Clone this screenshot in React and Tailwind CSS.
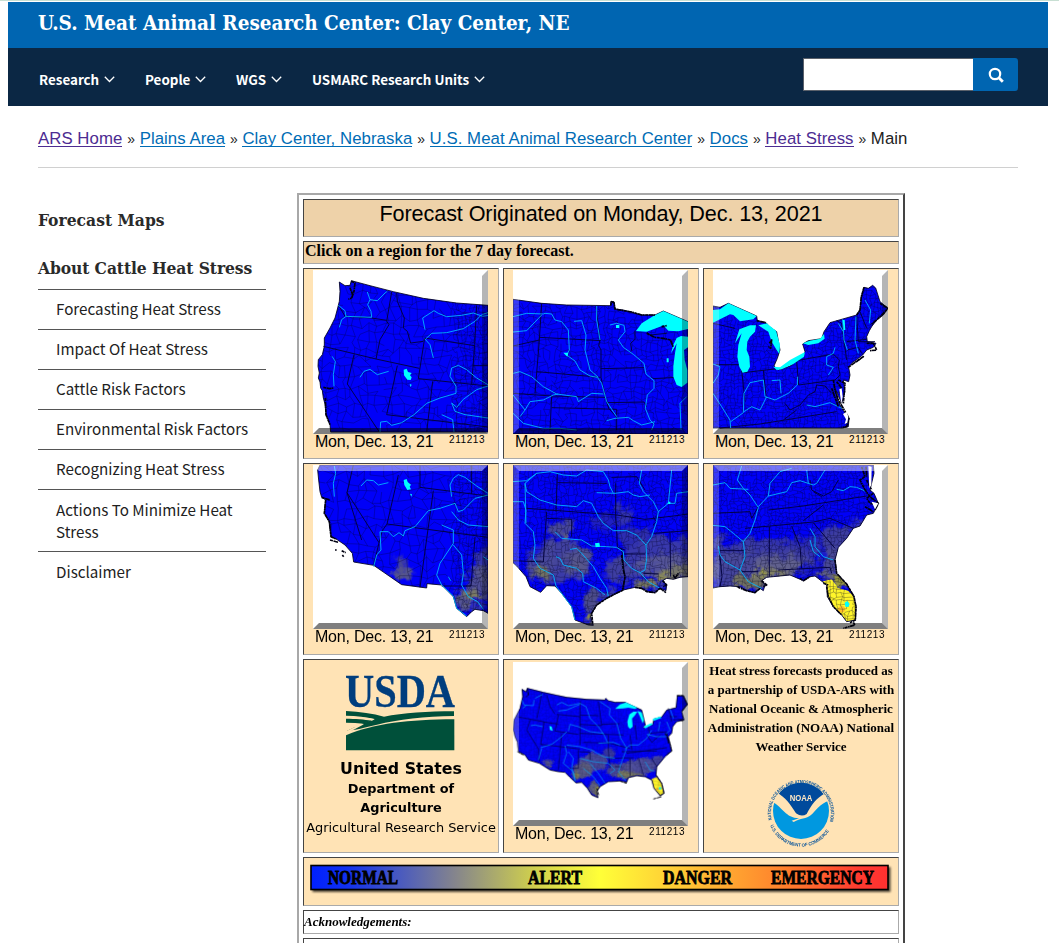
import React from "react";

const RIVER = "#00b4ff";

/* Irregular grid of county borders covering a w x h area. */
function counties(w, h, step, seed) {
  let s = seed;
  const rnd = () => {
    s = (s * 16807) % 2147483647;
    return s / 2147483647 - 0.5;
  };
  const nx = Math.ceil(w / step) + 1;
  const ny = Math.ceil(h / step) + 1;
  const p = [];
  for (let j = 0; j < ny; j++) {
    const row = [];
    for (let i = 0; i < nx; i++) row.push([Math.round(i * step + rnd() * step * 0.9), Math.round(j * step + rnd() * step * 0.9)]);
    p.push(row);
  }
  let d = "";
  for (let j = 0; j < ny; j++)
    for (let i = 0; i < nx; i++) {
      if (i + 1 < nx && rnd() < 0.32) d += `M${p[j][i]}L${p[j][i + 1]}`;
      if (j + 1 < ny && rnd() < 0.32) d += `M${p[j][i]}L${p[j + 1][i]}`;
    }
  return d;
}

const MAPS = {
  nw: {
    box: [69, 256, 525, 492], step: 24, east: 490,
    land: "M148 292L165 303L180 302L184 288L240 303L310 321L400 341L500 355L594 362V742H122L120 720L108 690L105 658L100 640L97 618L92 610L90 592L85 580L88 565L84 545L85 525L97 510L103 485L103 460L120 430L135 400L143 370L148 350L150 320Z",
    states: "M146 362L165 395L245 400L290 407M100 485L258 523L388 551M305 322L290 410L297 420L270 465L258 523M320 325L322 350L343 400L340 430L352 440L362 475L400 470M404 460L554 483M404 460L385 582L594 604M554 480L545 600M192 510L172 598L268 742M322 543L290 690L594 727M428 590L410 742M560 363L554 480M548 543H594",
    coast: "M184 290L195 295L192 320L185 340L175 344M180 310L188 330M100 608L118 612L130 610M106 640L108 690L120 720",
    rivers: "M145 362L165 378L168 395L245 398L243 380L233 360L240 345L232 322M148 428L155 405L168 395M240 345L262 348L285 325L292 320M405 435L398 400L432 378L445 386L470 396L515 392L550 385L578 395L594 392M408 462L425 446L470 444L520 432L555 410L575 390L594 384M404 462L420 480L430 520M210 578L222 560L240 554L262 570L296 560M126 515L136 530L130 570L132 605M270 742L272 712L290 710L305 722L335 714L372 690L410 656L450 640L498 626L498 605L480 575L485 550L505 542L530 555L560 580L594 600M485 655L500 668L520 644L560 615L594 604M485 655L495 680L525 690L594 700M455 690L488 705L492 742",
    water: "M341 555L350 552L354 562L365 565L360 572L365 578L362 586L352 585L342 572ZM359 598L365 600L362 607Z",
    right: true,
  },
  nc: {
    box: [39, 30, 525, 492], step: 16, east: 0,
    land: "M39 118L125 130L200 135L332 137L332 125L342 125L345 147L370 150L400 158L425 165L465 165L490 153L564 185V522H39Z",
    states: "M125 130L118 240L39 258M118 232L302 242M118 240L105 400M110 335L302 352M39 400L155 408L315 412M155 408L150 510M155 443L350 448V510M288 138L300 240L296 256L303 270V352L316 412L326 445L348 470M302 326L432 323M318 428L432 426L440 440M395 272L392 250L405 238V212M458 356L530 352M500 220L450 225L440 216M510 240L520 262",
    coast: "M332 137L335 125L342 128L345 147L370 152L395 156L425 165L465 165M440 220L465 232L490 235L512 240L520 262M485 200L500 197",
    rivers: "M39 170L80 160L130 162L135 160L155 162L165 180L185 185L205 210L208 270L200 285L225 303L240 330L270 348L292 352L305 370L320 425L340 455L350 470M290 138L290 180L300 240M222 184L245 182L258 225L255 270L270 330L295 352M330 195L350 190L372 196L375 215L355 240L370 262L400 283L432 310L438 342L462 362L462 385L442 405L436 445L450 480L462 492L455 510M39 216L80 212L125 165M40 340L60 335L95 350L130 380L170 402L230 410L235 425L275 400L310 402M60 470L75 450L90 425L130 420L160 405L175 402M39 405L75 450M39 460L70 490L130 505L180 505L230 510M320 482L345 475L385 472L400 482L425 495L465 485M543 510L540 430L560 410",
    water: "M408 213L425 190L460 168L490 153L564 185V207L535 214L505 212L490 196L480 200L440 215ZM513 280L520 255L530 234L543 228L564 230V262L552 270L554 300L562 330V368L545 381L530 375L520 350L520 318L525 280L530 250L522 265ZM348 195H358V204H348ZM500 295H506V307H500ZM190 278L205 278L202 290Z",
    left: true, right: true,
  },
  ne: {
    box: [39, 30, 525, 492], step: 11, east: 0,
    land: "M39 138L60 142L85 130L170 168L172 182L200 190L208 200L230 215L240 270L232 295L222 318L235 330L270 318L305 292L315 275L308 252L325 242L365 236L372 215L390 188L470 165L480 150L484 110L492 82L505 85L518 76L527 84L540 125L564 145L550 165L530 180L515 200L508 212L500 230L502 245L528 250L520 262L500 270L488 285L455 310L446 322L450 345L446 365L430 360L435 395L425 430L405 385L415 425L425 445L447 475L445 500L425 504H39Z",
    states: "M39 190L105 205M48 314L130 314M130 338L240 325M125 330L135 425M190 330L198 410M290 302L296 375L405 360L420 345L415 320L418 300L400 282L290 302M60 504L180 492L410 455M255 430L270 450L300 435L325 405L345 395L350 375L375 378L395 400M410 182L425 190L440 300M470 170L475 245L525 245M440 245L500 238M440 270L475 262L485 280M480 155L500 205M250 480L290 450",
    coast: "M208 250L215 240L212 265L205 260M400 360L405 390L415 420L430 445L447 475L440 500L425 503M410 365L425 385L418 400M445 322L475 300L490 290L470 305M500 250L520 250L530 270L510 272M540 130L564 145L550 160L530 180L512 195M415 360L435 370L430 430M170 182L198 188M395 385L415 440M470 165L480 150L484 110L492 82",
    rivers: "M39 312L60 320L55 345L39 370M39 400L65 440L90 480L92 504M92 485L130 458L132 400L150 368L190 360L195 410L225 420L265 400L292 375L293 350M132 455L155 440L180 450L200 410M215 362L240 360L243 400M428 178L432 240L442 270M468 170L465 240L475 280M415 190L430 215M405 262L400 280L380 290L380 315L400 322L385 345M320 435L345 440L390 428L425 445M495 120L512 150L508 190",
    water: "M39 150L60 148L85 130L170 168L160 178L120 184L100 165L90 163L39 188ZM105 250L118 208L150 196L168 196L165 215L150 230L142 245L140 270L148 290L150 320L142 335L128 338L118 320L112 290L115 255L125 220ZM175 196L200 190L228 212L240 255L238 282L230 270L215 245L205 215ZM220 320L240 322L270 300L315 276L312 290L280 312L245 328L230 330ZM308 250L330 242L360 236L372 222L374 236L355 250L325 255ZM428 180H434L436 210H431Z",
    islands: "M429 462L440 455L445 470L442 488L434 492L438 478ZM418 388L425 385L428 410L424 432Z",
    left: true, right: true,
  },
  sw: {
    box: [54, 15, 525, 492], step: 26, east: 480,
    land: "M75 15L68 30L71 60L75 95L80 112L92 120L88 160L103 185L108 230L125 238L150 255L172 280L176 306L236 316L320 374L395 384L396 371L440 375L475 410L485 445L515 470L530 455L540 448L565 452L579 460V15Z",
    states: "M175 15L156 98L252 248L236 316M156 98L200 240M310 45L276 192L579 232M415 92L375 382M375 82L579 108M375 15L375 84M530 15V102M540 232L528 378H440M276 192L262 212L252 248",
    coast: "M80 112L105 120M92 120L88 160L103 185L108 230L125 238M105 240L130 247M140 272L152 278M120 270H125M142 285L146 290",
    rivers: "M118 18L122 40L115 70L118 110M198 78L215 60L235 62L250 75L280 68M470 110L465 75L475 55L490 44L510 52L545 78L579 100M236 320L245 285L258 270L255 215L280 215L295 230L312 218L325 228L330 212L360 200L400 152L435 145L480 130M480 130L490 155L505 150L540 115L579 105M470 155L490 180L520 195L579 200M440 195L475 210L475 250L435 310L425 345L440 375L475 408L485 445L515 468M475 255L500 285L505 340L500 375L520 410L548 425L565 448M565 290L579 300M460 350L467 362",
    water: "M326 60L335 57L338 66L348 74L344 80L348 88L337 90L328 75ZM345 101L351 103L349 110Z",
    haze: [[320, 318, 20, 28, "#4b4a90", 0.9], [325, 338, 26, 14, "#5c5c84", 0.9], [570, 320, 30, 55, "#3a3aa8", 0.9], [555, 370, 42, 45, "#5a5a86", 0.85], [522, 408, 28, 18, "#85855a", 0.95], [500, 425, 20, 28, "#6c6c78", 0.8], [550, 440, 30, 12, "#4c4c98", 0.8]],
    top: true, right: true,
  },
  sc: {
    box: [39, 15, 525, 492], step: 12, east: 0,
    land: "M39 15H564V350L540 352L520 358L500 355L488 362L500 375L498 392L480 385L465 398L445 395L425 385L405 382L370 390L345 402L320 415L290 435L275 460L272 470L280 496L265 495L225 480L215 440L185 400L165 378L140 377L122 397L90 380L78 350L50 318L39 308Z",
    states: "M172 40L168 155M172 68L320 70M80 145L350 165L435 178L520 168L564 162M140 155L130 306L39 302M140 175L215 178V230M347 70V170L350 210L352 262L375 270M335 52L410 50L435 90M370 282H435M460 172L470 185L460 195M460 220L564 212M510 218L512 350M430 340L475 342M365 265L372 330L375 350L370 388",
    coast: "M405 382L425 385L440 395L465 398L480 385L498 398M488 362L500 375L490 380M370 390L345 402L320 415L290 435L275 460L278 490M365 285L370 330L375 350L368 388M520 345L525 355L535 340",
    rivers: "M39 65L80 62L110 40L150 35L190 45L230 48L260 30L310 35L325 60L330 80L340 100M290 98L345 100L385 95L400 105L420 110L450 105M425 30L418 70L430 95L460 125L475 155L470 185L455 230L438 255L440 295L435 330L420 338L445 365L480 385M75 70L80 95L120 120L170 135L230 140L250 122L275 130L295 170L310 190L340 212L380 212L410 225L438 255M165 215L185 235L245 240L275 258L320 260L350 262L370 275L372 300L395 325L420 338M210 268L230 265L245 280L280 320L300 355L320 385L325 410M168 290L180 295L190 315L230 325L248 340L250 365L290 385L315 405M39 125L70 125L78 150L75 190L100 215L105 255L100 295L120 325L160 345L168 378M515 30L510 80L505 130L475 155M565 95L530 100L525 130L500 130M168 378L215 440L225 480M78 190L75 70L110 40",
    water: "M285 250L298 248L300 260L287 262ZM505 125H511V132H505Z",
    haze: [[190, 290, 75, 50, "#4a4a98", 0.9], [150, 330, 70, 40, "#46469a", 0.85], [240, 300, 40, 40, "#55558c", 0.8], [130, 290, 40, 40, "#48489a", 0.7], [180, 205, 34, 26, "#50508e", 0.9], [198, 232, 12, 16, "#777765", 0.9], [125, 340, 24, 22, "#77775a", 0.9], [230, 330, 35, 30, "#5c5c88", 0.7], [330, 185, 70, 20, "#2828b4", 0.8], [375, 160, 24, 26, "#3838a8", 0.9], [410, 235, 70, 30, "#38389f", 0.8], [355, 330, 38, 40, "#444496", 0.9], [400, 310, 40, 50, "#46469a", 0.8], [490, 270, 90, 40, "#3c3ca4", 0.9], [500, 315, 90, 35, "#5a5a92", 0.9], [530, 338, 60, 18, "#787868", 0.95], [445, 378, 50, 20, "#808058", 0.95], [275, 420, 26, 30, "#55557f", 0.9], [265, 475, 18, 22, "#909040", 0.95], [495, 350, 18, 7, "#b0b038", 1], [320, 400, 35, 16, "#4c4c96", 0.8]],
    top: true, left: true, right: true,
  },
  se: {
    box: [39, 15, 525, 492], step: 11, east: 0,
    land: "M39 15H520L522 40L510 90L522 100L535 130L520 160L500 165L480 198L460 205L440 235L415 262L405 300L410 340L440 372L462 410L468 440L466 480L440 485L425 465L400 440L382 410L380 375L345 348L330 350L310 362L270 345L220 350L200 352L185 362L195 375L190 392L180 385L165 398L140 392L120 380L90 378L60 380L39 384Z",
    states: "M39 160L150 155L155 175L175 140M205 150L310 138L500 108M135 205L340 186L390 175L460 205M208 200V350M275 198L300 260L305 325M235 330L390 322L395 340M60 272H132M125 335H175M340 188L405 265M310 182L370 135M330 60L335 90L370 108L395 95L415 60M365 110L340 95M60 380L66 350L58 270",
    coast: "M180 385L165 398L140 392L110 380M185 362L200 375L190 380M485 20L495 50L480 60L495 90L510 110L535 130L525 150M500 60L515 90M498 20L500 50M520 100L500 115L510 130L535 135M495 140L520 155M300 355L310 362L330 350M405 300L410 340L440 372L462 410L468 440L466 480L450 488M380 380L385 410L400 440L425 465M460 487L465 495L430 505M370 370L385 375",
    rivers: "M125 18L112 60L130 85L150 105L170 135L175 142L165 180L150 220L130 245L135 290L120 330L145 365L185 385M39 75L75 68L90 85L145 88M205 108L210 70L240 35L275 25M175 140L205 108L260 95L275 68L300 62L340 75L350 70L375 30M320 30L325 70M39 196L75 200L100 220L130 245M55 258L60 285L75 305L120 330M410 88L430 92L450 80L470 82L500 95M330 205L345 230L345 260L370 290L400 300M330 240L340 275L360 290",
    water: "M434 428L442 423L449 432L445 441L436 440Z",
    islands: "M505 18L515 20L514 75L508 85ZM515 125L535 130L525 148Z",
    haze: [[200, 275, 160, 36, "#3a3aa4", 0.95], [200, 310, 160, 32, "#4c4c98", 0.95], [360, 245, 90, 26, "#2c2cb0", 0.8], [420, 235, 50, 40, "#3f3f9e", 0.95], [470, 190, 20, 16, "#4848a0", 0.8], [90, 330, 60, 50, "#46469a", 0.95], [230, 320, 70, 26, "#64648c", 0.9], [150, 370, 55, 24, "#77775a", 0.95], [220, 342, 60, 12, "#85855a", 0.95], [180, 345, 16, 7, "#b0b030", 1], [395, 300, 26, 40, "#505092", 0.95], [375, 347, 40, 14, "#686878", 0.95], [425, 360, 25, 30, "#99993c", 1], [60, 260, 25, 40, "#3a3aa5", 0.9], [335, 325, 36, 14, "#1818d0", 0.9]],
    florida: "M365 365L395 358L415 385L445 392L462 410L468 440L466 480L440 485L425 465L400 440L382 410L380 375Z",
    orange: [425, 448],
    top: true, left: true, right: true,
  },
  us: {
    box: [39, 21, 525, 492], step: 9, east: 0, faint: true,
    land: "M66 103L78 110L82 100L130 112L200 127L260 133L315 135L317 130L325 137L345 142L375 142L425 165L436 210L430 218L458 208L462 192L485 186L500 165L528 158L532 122L550 122L562 148L545 170L552 195L530 200L518 215L515 235L505 245L512 275L515 288L495 305L470 335L468 360L485 385L492 415L480 422L462 400L455 375L435 365L410 362L385 368L380 382L360 378L325 380L300 395L290 410L294 428L275 420L262 400L245 382L228 384L208 365L195 352L175 350L150 345L118 325L85 315L75 300L55 290L52 262L45 245L40 225L42 195L60 160L68 125Z",
    states: "M52 185L155 205L175 207M125 112L118 155L110 190M140 120L150 155L165 178M170 178L240 185M175 180L165 228L235 238M90 195L80 225L115 282L118 320M132 200L122 268M122 268L240 282M185 235L175 345M240 140V270M240 180L295 182M240 208L305 212M240 235L370 240M250 262L325 264L390 280M235 285V340L205 340M238 290L270 292V315M325 240V290L330 340M295 140L305 212M305 208L360 206M365 290L470 288M390 240L395 285M390 310V362M415 308L430 360M330 310L400 308M345 335H365M380 295L500 278M440 240L455 262L480 240M455 310L470 335M405 210L410 255M445 215L448 235L500 230M505 160L515 200M520 195L548 192M510 185L530 185",
    coast: "M82 100L85 120L78 125M495 235L510 265L515 288L500 300M500 235L505 265M360 378L380 385M530 122L550 122L562 148L545 170M540 195L550 198M52 290L70 300M290 400L296 420M468 360L485 385L492 415L480 422M460 432L485 425",
    rivers: "M66 135L72 150L100 152L102 135M68 160L78 152M105 130L128 118M170 150L185 142L205 152L240 145L258 155L270 190L295 215L312 240L322 262M175 168L200 165L240 148M92 212L105 210L128 215M125 280L115 315M122 278L155 268L185 245L200 230M205 228L210 208L235 215L270 230L310 235M200 270L240 275L275 285L310 305L345 310M195 272L200 295L190 325L220 350L225 380M205 290L220 310L215 340L225 375M240 310L280 320L325 325L345 345M250 340L280 365L300 392M270 325L295 355L315 385M300 140L315 150L330 160L328 180L350 205L362 250L380 280L365 320L355 350L378 378M345 345L330 355M375 282L390 270L415 270L440 250L455 225M295 265L340 262L360 270M500 200L510 225L495 240M480 200L475 228M435 320L450 345L462 348M510 162L520 190M440 238L470 245L500 245",
    water: "M345 162L360 148L378 142L412 158L405 162L385 158L370 160ZM382 200L388 178L400 170H412L404 182L396 190L398 215L390 222L384 215ZM412 168L425 172L432 195L428 205L420 185ZM430 215L455 204L458 208L436 220ZM458 192L482 184L484 189L460 198ZM148 213L155 215L158 228L150 225Z",
    haze: [[145, 325, 13, 11, "#5a5a80", 0.9], [280, 320, 45, 26, "#505090", 0.9], [250, 345, 30, 24, "#60607c", 0.9], [228, 362, 13, 12, "#808050", 0.9], [330, 295, 20, 16, "#3c3c9c", 0.9], [360, 345, 40, 22, "#50508e", 0.9], [420, 335, 45, 22, "#555592", 0.9], [390, 360, 45, 9, "#808058", 0.9], [470, 322, 18, 18, "#4c4c94", 0.9], [282, 400, 18, 22, "#686870", 0.9], [292, 412, 8, 14, "#a8a838", 1]],
    florida: "M455 372L470 366L485 385L492 415L480 422L462 400Z",
    orange: [472, 402],
    lake: [480, 400],
    left: true, right: true,
  },
};

function RegionMap({ id }) {
  const m = MAPS[id];
  const [x, y, w, h] = m.box;
  const r = x + w;
  const b = y + h;
  const fade = `fade-${id}`;
  const clip = `land-${id}`;
  const rough = `rough-${id}`;
  return (
    <svg className="block h-[164px] w-[175px] bg-white" viewBox={`${x} ${y} ${w} ${h}`} preserveAspectRatio="none">
      <defs>
        <clipPath id={clip}><path d={m.land} /></clipPath>
        <filter id={fade} x="-50%" y="-50%" width="200%" height="200%"><feGaussianBlur stdDeviation={m.faint ? 3 : 7} /></filter>
        <filter id={rough} filterUnits="userSpaceOnUse" x={x} y={y} width={w} height={h}>
          <feTurbulence type="fractalNoise" baseFrequency="0.03" numOctaves="3" seed="4" />
          <feDisplacementMap in="SourceGraphic" scale={m.faint ? 25 : 60} xChannelSelector="R" yChannelSelector="G" />
        </filter>
      </defs>
      <path d={m.land} fill="#0000f8" />
      <g clipPath={`url(#${clip})`}>
        {m.haze && (
          <g filter={`url(#${rough})`}>
            {m.haze.map(([cx, cy, rx, ry, fill, o], i) => (
              <ellipse key={i} cx={cx} cy={cy} rx={rx} ry={ry} fill={fill} opacity={o} filter={`url(#${fade})`} />
            ))}
          </g>
        )}
        {m.florida && <path d={m.florida} fill="#fff52a" />}
        {m.orange && <circle cx={m.orange[0]} cy={m.orange[1]} r={m.faint ? 4 : 10} fill="#ffc02a" />}
        <path d={counties(w, h, m.step, 77)} transform={`translate(${x} ${y})`} fill="none" stroke="#000028" strokeWidth={m.faint ? 1.5 : 2} opacity={m.faint ? 0.25 : 0.42} />
        {m.east > 0 && <path d={counties(r - m.east, h, 13, 31)} transform={`translate(${m.east} ${y})`} fill="none" stroke="#000028" strokeWidth="2" opacity="0.4" />}
      </g>
      <path d={m.land} fill="none" stroke="#00001c" strokeWidth="2.5" strokeLinejoin="round" />
      <path d={m.states} fill="none" stroke="#00003c" strokeWidth={m.faint ? 2 : 2.8} />
      <path d={m.rivers} fill="none" stroke={RIVER} strokeWidth={m.faint ? 2 : 3} strokeLinejoin="round" opacity="0.9" />
      <path d={m.water} fill="#00ffff" />
      {m.lake && <circle cx={m.lake[0]} cy={m.lake[1]} r="4" fill="#20e8d8" />}
      <path d={m.coast} fill="none" stroke="#000010" strokeWidth={m.faint ? 3 : 5} strokeLinejoin="round" strokeDasharray="9 2 14 1 5 2" />
      {m.islands && <path d={m.islands} fill="#fff" />}
      {m.top && <path d={`M${x} ${y}H${r}L${r - 18} ${y + 18}H${x + 18}Z`} fill="#fff" opacity="0.45" />}
      {m.left && <path d={`M${x} ${y}L${x + 18} ${y + 18}V${b - 18}L${x} ${b}Z`} fill="#fff" opacity="0.22" />}
      <path d={`M${r} ${y}L${r - 18} ${y + 18}V${b - 18}L${r} ${b}Z`} fill="#000" opacity="0.29" />
      <path d={`M${x} ${b}L${x + 18} ${b - 18}H${r - 18}L${r} ${b}Z`} fill="#000" opacity="0.5" />
    </svg>
  );
}

const CELL = "border border-t-[#444] border-l-[#444] border-r-[#aaa] border-b-[#aaa]";

function MapCell({ id, top = "pt-px" }) {
  return (
    <a className={`${CELL} ${top} block bg-[#ffe3b5] pl-[9px]`}>
      <RegionMap id={id} />
      <div className="flex w-[175px] justify-between pr-[3px] pl-[2px] leading-[16px]">
        <span className="text-[16px] whitespace-nowrap tracking-[-0.22px]">Mon, Dec. 13, 21</span>
        <span className="pt-px text-[10px] leading-[9px] tracking-[0.55px]">211213</span>
      </div>
    </a>
  );
}

function UsdaLogo() {
  return (
    <svg className="mx-auto block h-[78px] w-[110px]" viewBox="154 53 330 234">
      <text x="151" y="154" textLength="330" lengthAdjust="spacingAndGlyphs" fontFamily="Liberation Serif" fontSize="139" fill="#003e7e" stroke="#003e7e" strokeWidth="1">USDA</text>
      <g fill="#00503a">
        <path d="M153 167C195 169 235 175 268 184C325 173 400 168 478 168V182C390 183 310 193 247 208C210 217 180 224 156 227C180 215 210 202 240 191C215 185 185 181 153 181Z" />
        <path d="M153 240C240 204 340 193 479 192V285H153Z" />
      </g>
      <path d="M153 183C185 184 215 187 240 192L232 196C210 191 180 188 153 188ZM153 204C175 204 195 205 208 207L153 236V228L182 214L153 212Z" fill="#ffe3b5" />
      <path d="M153 190C180 190 210 192 230 196L207 205C190 203 172 202 153 202Z" fill="#00503a" />
    </svg>
  );
}

function NoaaLogo() {
  return (
    <svg className="mx-auto block h-[68px] w-[68px] overflow-visible" viewBox="200 366 204 204">
      <defs>
        <path id="noaa-top" d="M214 495A90 90 0 1 1 388 500" />
        <path id="noaa-bottom" d="M206 500A99 99 0 0 0 398 500" />
      </defs>
      <circle cx="302" cy="468" r="84" fill="#0098e0" />
      <path d="M232 421A84 84 0 0 1 372 421C355 431 342 455 331 477C318 486 298 487 281 479C268 450 252 430 232 421Z" fill="#004a9c" />
      <path d="M228 412C256 427 270 448 287 475Q304 487 319 477C333 451 347 429 376 414L386 437C358 446 346 468 332 480C318 493 300 488 280 501L274 497L296 490C255 488 248 458 217 441Z" fill="#ffe3b5" />
      <text x="302" y="437" textAnchor="middle" textLength="68" lengthAdjust="spacingAndGlyphs" fontFamily="Liberation Sans" fontWeight="700" fontSize="29" fill="#ffe8c5">NOAA</text>
      <g fontFamily="Liberation Sans" fontWeight="700" fontSize="14" fill="#0a559b">
        <text><textPath href="#noaa-top" textLength="328" lengthAdjust="spacingAndGlyphs">NATIONAL OCEANIC AND ATMOSPHERIC ADMINISTRATION</textPath></text>
        <text><textPath href="#noaa-bottom" startOffset="12" textLength="220" lengthAdjust="spacingAndGlyphs">U.S. DEPARTMENT OF COMMERCE</textPath></text>
      </g>
    </svg>
  );
}

function Chevron() {
  return (
    <svg className="mt-px ml-[5px] h-[7px] w-[11px]" viewBox="0 0 11 7" fill="none" stroke="#fff" strokeWidth="1.3">
      <path d="M.8 .8L5.5 5.5L10.2 .8" />
    </svg>
  );
}

const NAV = [
  ["Research", "w-[106px]"],
  ["People", "w-[91px]"],
  ["WGS", "w-[76px]"],
  ["USMARC Research Units", "w-[200px]"],
];

const CRUMBS = [
  ["ARS Home", "text-[#4c2c92] border-[#4c2c92]"],
  ["Plains Area", "text-[#006cb5] border-[#006cb5]"],
  ["Clay Center, Nebraska", "text-[#006cb5] border-[#006cb5]"],
  ["U.S. Meat Animal Research Center", "text-[#006cb5] border-[#006cb5]"],
  ["Docs", "text-[#006cb5] border-[#006cb5]"],
  ["Heat Stress", "text-[#4c2c92] border-[#4c2c92]"],
];

const LINKS = ["Forecasting Heat Stress", "Impact Of Heat Stress", "Cattle Risk Factors", "Environmental Risk Factors", "Recognizing Heat Stress"];

const SANS = "font-['Noto_Sans_CJK_SC',sans-serif]";
const SLAB = "font-['DejaVu_Serif_Condensed','DejaVu_Serif',serif] font-bold";

export default function App() {
  return (
    <div className="h-[943px] w-[1059px] overflow-hidden bg-white font-['Liberation_Sans',sans-serif] text-black">
      <div className="mb-px h-px bg-[#c8dfd3]" />
      <header className="ml-2 w-[1040px]">
        <div className="h-[46px] bg-[#0065b1] pl-[30px]">
          <h1 className={`${SLAB} text-[20.5px] leading-[43px] tracking-[-0.02px] whitespace-nowrap text-white`}>U.S. Meat Animal Research Center: Clay Center, NE</h1>
        </div>
        <nav className="flex h-[58px] items-start justify-between bg-[#0b2744] pr-[30px] pl-[31px]">
          <div className={`${SANS} flex pt-[20px] text-[13.4px] leading-[22px] font-bold text-white`}>
            {NAV.map(([label, w]) => (
              <a key={label} className={`${w} flex items-center whitespace-nowrap`}>{label}<Chevron /></a>
            ))}
          </div>
          <form className="mt-[10px] flex h-[33px]">
            <div className="w-[170px] border border-r-0 border-[#5b616b] bg-white" />
            <button type="button" className="flex w-[45px] items-center justify-center rounded-r-[3px] bg-[#0065b1]">
              <svg className="h-[16px] w-[16px]" viewBox="0 0 16 16" fill="none" stroke="#fff" strokeWidth="2.2"><circle cx="7" cy="7" r="5.2" /><path d="M10.8 10.8L14.8 14.8" strokeWidth="2.8" /></svg>
            </button>
          </form>
        </nav>
      </header>

      <div className="mx-[38px] flex h-[62px] w-[980px] items-start gap-[5px] border-b border-[#d0d0d0] pt-[24px] text-[16.8px] leading-[18px] tracking-[0.05px] whitespace-nowrap text-[#222]">
        {CRUMBS.map(([label, c]) => (
          <React.Fragment key={label}>
            <a className={`${c} h-[17px] border-b`}>{label}</a>
            <span className="w-[7.3px] text-[14px]">»</span>
          </React.Fragment>
        ))}
        <span>Main</span>
      </div>

      <main className="flex items-start pt-[25px] pl-[38px]">
        <aside className={`${SANS} w-[228px] pt-[13px] text-[15.2px] leading-[22px] text-[#212121]`}>
          <h2 className={`${SLAB} text-[17.3px] leading-[28px] tracking-[0.02px] text-[#2a2a2a]`}>Forecast Maps</h2>
          <h2 className={`${SLAB} mt-[20px] mb-[7px] text-[17.3px] leading-[28px] tracking-[-0.1px] whitespace-nowrap text-[#2a2a2a]`}>About Cattle Heat Stress</h2>
          {LINKS.map((l) => (
            <a key={l} className="block h-[40.1px] border-t border-[#555] pt-[7px] pl-[18px] whitespace-nowrap">{l}</a>
          ))}
          <a className="block h-[62px] border-t border-[#555] pt-[8px] pl-[18px]">Actions To Minimize Heat Stress</a>
          <a className="block border-t border-[#555] pt-[8px] pl-[18px]">Disclaimer</a>
        </aside>

        <section className="ml-[31px] grid w-[608px] grid-cols-3 grid-rows-[38px_23px_191px_192px_194px_49px_24px_40px] gap-1 border-2 border-t-[#a8a8a8] border-r-[#444] border-b-[#444] border-l-[#a8a8a8] p-1">
          <div className={`${CELL} col-span-3 bg-[#eed2a9] text-center text-[21.6px] leading-[28px] tracking-[-0.1px]`}>Forecast Originated on Monday, Dec. 13, 2021</div>
          <div className={`${CELL} col-span-3 bg-[#eed2a9] pl-px font-['Liberation_Serif',serif] text-[16px] leading-[18px] font-bold`}>Click on a region for the 7 day forecast.</div>
          <MapCell id="nw" />
          <MapCell id="nc" />
          <MapCell id="ne" />
          <MapCell id="sw" />
          <MapCell id="sc" />
          <MapCell id="se" />
          <div className={`${CELL} bg-[#ffe3b5] pt-[13px] text-center font-['DejaVu_Sans',sans-serif] text-[12.9px] leading-[19px] font-bold whitespace-nowrap`}>
            <UsdaLogo />
            <div className="mt-[7px] text-[15.8px] leading-[21px]">United States</div>
            <div>Department of</div>
            <div>Agriculture</div>
            <div className="flex justify-center text-[12.9px] leading-[21px] font-normal">Agricultural Research Service</div>
          </div>
          <MapCell id="us" top="pt-[2px]" />
          <div className={`${CELL} bg-[#ffe3b5] pt-px text-center font-['Liberation_Serif',serif] text-[13px] leading-[19px] font-bold whitespace-nowrap`}>
            <p>Heat stress forecasts produced as</p>
            <p>a partnership of USDA-ARS with</p>
            <p>National Oceanic &amp; Atmospheric</p>
            <p>Administration (NOAA) National</p>
            <p className="mb-[21px]">Weather Service</p>
            <NoaaLogo />
          </div>
          <div className={`${CELL} col-span-3 bg-[#ffe3b5] pt-[6px] pl-[6px]`}>
            <svg className="block h-[30px] w-[584px]" viewBox="0 0 584 30">
              <defs>
                <linearGradient id="scale">
                  <stop offset="0" stopColor="#0020ff" /><stop offset=".06" stopColor="#1030f0" /><stop offset=".25" stopColor="#85858c" />
                  <stop offset=".38" stopColor="#cccc50" /><stop offset=".5" stopColor="#ffff38" /><stop offset=".65" stopColor="#ffc535" /><stop offset=".82" stopColor="#ff802c" /><stop offset=".95" stopColor="#ff3a30" /><stop offset="1" stopColor="#ff3030" />
                </linearGradient>
                <filter id="drop"><feGaussianBlur stdDeviation="1" /></filter>
              </defs>
              <rect x="2.5" y="3" width="578" height="25" fill="#000" opacity=".7" filter="url(#drop)" />
              <rect x="1" y="1.5" width="577" height="24" fill="url(#scale)" stroke="#000" strokeWidth="1.6" />
              <g fontFamily="Liberation Serif" fontWeight="700" fontSize="18.5" stroke="#000" strokeWidth=".8">
                <text x="18" y="20" textLength="70" lengthAdjust="spacingAndGlyphs">NORMAL</text>
                <text x="218" y="20" textLength="54" lengthAdjust="spacingAndGlyphs">ALERT</text>
                <text x="353" y="20" textLength="69" lengthAdjust="spacingAndGlyphs">DANGER</text>
                <text x="461" y="20" textLength="103" lengthAdjust="spacingAndGlyphs">EMERGENCY</text>
              </g>
            </svg>
          </div>
          <div className={`${CELL} col-span-3 font-['Liberation_Serif',serif] text-[13px] leading-[21px] font-bold italic`}>Acknowledgements:</div>
          <div className={`${CELL} col-span-3`} />
        </section>
      </main>
    </div>
  );
}
